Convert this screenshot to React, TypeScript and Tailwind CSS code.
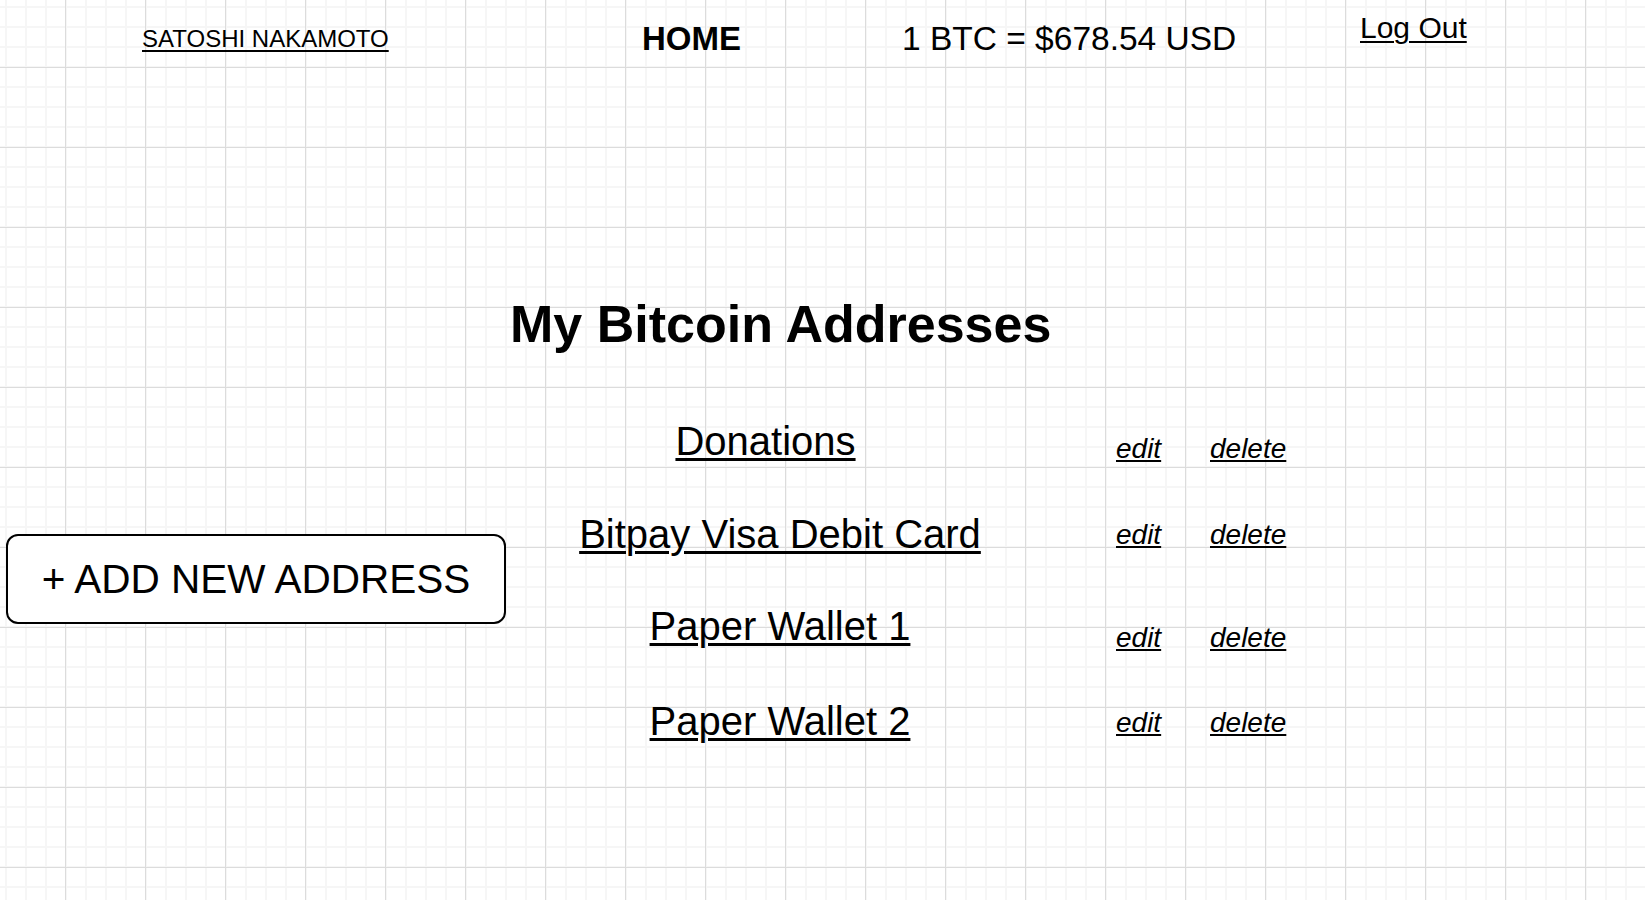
import React from "react";

type Row = {
  name: string;
  rowClass: string;
  nameClass: string;
  actionClass: string;
};

const rows: Row[] = [
  { name: "Donations", rowClass: "h-[93px]", nameClass: "pr-[29px]", actionClass: "pt-[14px]" },
  { name: "Bitpay Visa Debit Card", rowClass: "h-[92px]", nameClass: "", actionClass: "pt-[7px]" },
  { name: "Paper Wallet 1", rowClass: "h-[95px]", nameClass: "", actionClass: "pt-[18px]" },
  { name: "Paper Wallet 2", rowClass: "h-[60px]", nameClass: "", actionClass: "pt-[8px]" },
];

export default function App() {
  return (
    <div
      className="min-h-[900px] w-full bg-white text-black font-['Liberation_Sans',Arial,Helvetica,sans-serif] [background-image:linear-gradient(to_right,#dcdcdc_1px,transparent_1px),linear-gradient(to_bottom,#dcdcdc_1px,transparent_1px),linear-gradient(to_right,#f6f6f6_2px,transparent_2px),linear-gradient(to_bottom,#f6f6f6_2px,transparent_2px)] [background-size:80px_80px,80px_80px,20px_20px,20px_20px] [background-position:65px_0,0_67px,5px_0,0_6px]"
    >
      <header className="flex h-[60px] items-start pl-[142px]">
        <div className="w-[500px] pt-[27px]">
          <a href="#" className="text-[24px] leading-none underline decoration-2 underline-offset-[3px]">
            SATOSHI NAKAMOTO
          </a>
        </div>
        <div className="w-[260px] pt-[22px] text-[33px] font-bold leading-none">HOME</div>
        <div className="w-[458px] pt-[22px] text-[33.5px] leading-none">1 BTC = $678.54 USD</div>
        <div className="pt-[13px]">
          <a href="#" className="text-[30px] leading-none underline decoration-2 underline-offset-[3px]">
            Log Out
          </a>
        </div>
      </header>

      <h1 className="mt-[238px] pl-[510px] text-[52px] font-bold leading-none">My Bitcoin Addresses</h1>

      <section className="mt-[71px] flex items-start">
        <div className="w-[560px] pl-[6px] pt-[113px]">
          <button className="flex h-[90px] w-[500px] items-center justify-center rounded-[12px] border-2 border-black bg-white text-[40.5px] leading-none">
            + ADD NEW ADDRESS
          </button>
        </div>

        <div className="flex flex-col">
          {rows.map((r) => (
            <div key={r.name} className={"flex items-start " + r.rowClass}>
              <div className={"w-[440px] text-center " + r.nameClass}>
                <a href="#" className="text-[40px] leading-none underline decoration-[3px] underline-offset-[3px]">
                  {r.name}
                </a>
              </div>
              <div className={"ml-[116px] w-[94px] " + r.actionClass}>
                <a href="#" className="text-[28px] italic leading-none underline decoration-2 underline-offset-[2px]">
                  edit
                </a>
              </div>
              <div className={r.actionClass}>
                <a href="#" className="text-[28px] italic leading-none underline decoration-2 underline-offset-[2px]">
                  delete
                </a>
              </div>
            </div>
          ))}
        </div>
      </section>
    </div>
  );
}
